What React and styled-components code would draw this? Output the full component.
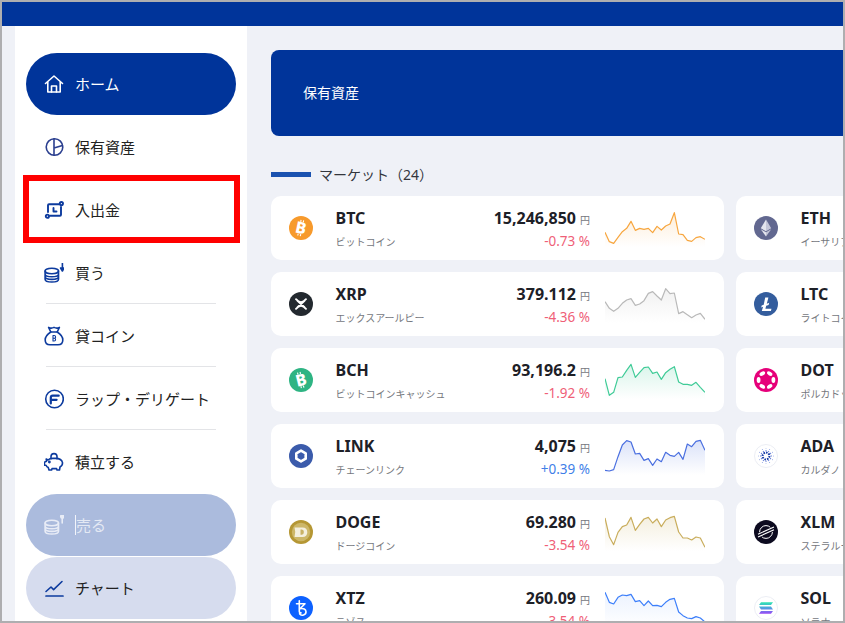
import React from "react";
import styled, { createGlobalStyle } from "styled-components";

const Global = createGlobalStyle`
  html, body { margin: 0; padding: 0; background: #fff; }
  body { font-family: "Noto Sans", "Noto Sans CJK JP", sans-serif; }
  * { box-sizing: border-box; }
`;

const Frame = styled.div`
  position: relative;
  width: 845px;
  height: 623px;
  border: 2px solid #aeaeb0;
  background: #eff1f7;
  overflow: hidden;
  display: flex;
  flex-direction: column;
`;
const TopBar = styled.header`
  flex: 0 0 24px;
  background: #00349a;
`;
const Body = styled.div`
  flex: 1;
  min-height: 0;
  display: flex;
  padding-left: 13px;
`;
const Sidebar = styled.nav`
  flex: 0 0 232px;
  background: #fff;
  padding: 27px 11px 0;
  display: flex;
  flex-direction: column;
  gap: 1px;
`;
const itemBg = { home: "#00349a", sell: "#abbbdd", chart: "#d6dcee", plain: "transparent" };
const itemFg = { home: "#fff", sell: "#e4e9f4", chart: "#222", plain: "#222" };
const NavItem = styled.a`
  flex: 0 0 62px;
  padding: 0 20px;
  border-radius: 31px;
  background: ${(p) => itemBg[p.$kind]};
  color: ${(p) => itemFg[p.$kind]};
`;
const NavInner = styled.div`
  height: 100%;
  display: flex;
  align-items: center;
  gap: 11px;
  font-size: 15px;
  border-bottom: 1px solid ${(p) => (p.$divided ? "#e3e4e7" : "transparent")};
`;
const NavIcon = styled.svg`
  flex: 0 0 20px;
  width: 20px;
  height: 20px;
  margin-left: -2px;
  fill: none;
  stroke: ${(p) => p.$color || "#0d3b9e"};
  stroke-width: ${(p) => p.$weight || 1.6};
  stroke-linecap: round;
  stroke-linejoin: round;
`;
const CaretLabel = styled.span`
  border-left: 1px solid #f2f4fa;
  line-height: 20px;
`;
const RedBox = styled.div`
  position: absolute;
  left: 21px;
  top: 173px;
  width: 217px;
  height: 68px;
  border: 6px solid #ff0000;
`;
const Main = styled.main`
  flex: 1;
  min-width: 0;
  padding: 24px 0 0 24px;
  overflow: hidden;
`;
const Hero = styled.section`
  width: 640px;
  height: 86px;
  border-radius: 8px;
  background: #00349a;
  color: #fff;
  font-size: 14px;
  padding: 0 0 2px 32px;
  display: flex;
  align-items: center;
`;
const SectionHead = styled.h2`
  margin: 26px 0 10px;
  height: 24px;
  display: flex;
  align-items: center;
  gap: 8px;
  font-size: 14px;
  font-weight: 400;
  color: #33363d;
  &::before {
    content: "";
    width: 40px;
    height: 5px;
    background: #1a52b0;
  }
`;
const Grid = styled.div`
  display: grid;
  grid-template-columns: 453px 453px;
  grid-auto-rows: 64px;
  gap: 12px;
`;
const Card = styled.article`
  background: #fff;
  border-radius: 10px;
  padding: 0 19px 0 18px;
  display: flex;
  align-items: flex-start;
`;
const CoinLogo = styled.svg`
  flex: 0 0 24px;
  width: 24px;
  height: 24px;
  margin: 20px 23px 0 0;
`;
const Names = styled.div`
  flex: 1;
  min-width: 0;
  padding-top: 10px;
  margin-left: -0.5px;
  white-space: nowrap;
`;
const Symbol = styled.div`
  font-size: 16px;
  line-height: 24px;
  font-weight: 700;
  color: #1d2027;
`;
const CoinName = styled.div`
  font-size: 10px;
  line-height: 14px;
  margin-top: 5px;
  color: #75777d;
`;
const Quote = styled.div`
  padding-top: 10px;
  text-align: right;
  white-space: nowrap;
`;
const Price = styled.div`
  font-size: 16px;
  line-height: 24px;
  font-weight: 700;
  color: #1d2027;
`;
const Yen = styled.span`
  font-size: 10px;
  font-weight: 400;
  color: #75777d;
  margin-left: 4px;
`;
const Change = styled.div`
  font-size: 13.5px;
  line-height: 18px;
  color: ${(p) => (p.$up ? "#3f7fe8" : "#ef5f78")};
`;
const Spark = styled.svg`
  flex: 0 0 100px;
  width: 100px;
  height: 64px;
  margin-left: 15px;
`;

function Sparkline({ id, color, ys, tint = 0.2 }) {
  const pts = ys.map((y, i) => [(i * 13) / 3, y / 3]);
  pts[pts.length - 1][0] = 100;
  const line = pts.map((p) => p.join(",")).join(" ");
  const area = `0,51 ${line} 100,51`;
  return (
    <Spark viewBox="0 0 100 64">
      <defs>
        <linearGradient id={id} x1="0" y1="0" x2="0" y2="1">
          <stop offset="0" stopColor={color} stopOpacity={tint} />
          <stop offset="1" stopColor={color} stopOpacity="0" />
        </linearGradient>
      </defs>
      <polygon points={area} fill={`url(#${id})`} />
      <polyline points={line} fill="none" stroke={color} strokeWidth="1.2" strokeLinejoin="round" />
    </Spark>
  );
}

const Letter = ({ children, rotate = 12, size = 16 }) => (
  <text
    x="12"
    y="17.6"
    textAnchor="middle"
    fill="#fff"
    fontFamily="Noto Sans, sans-serif"
    fontWeight="800"
    fontSize={size}
    transform={`rotate(${rotate} 12 12)`}
  >
    {children}
  </text>
);

const BitcoinMark = ({ rotate }) => (
  <g transform={`rotate(${rotate} 12 12)`} stroke="#fff" strokeWidth="1.1">
    <path d="M10.4 4v2M13 4v2M10.4 18v2M13 18v2" />
  </g>
);

const logos = {
  BTC: (
    <>
      <circle cx="12" cy="12" r="12" fill="#f79a2c" />
      <BitcoinMark rotate={12} />
      <Letter>B</Letter>
    </>
  ),
  XRP: (
    <>
      <circle cx="12" cy="12" r="12" fill="#23292f" />
      <path d="M7 7.2 Q12 13 17 7.2 M7 16.8 Q12 11 17 16.8 M8.5 8.8 15.5 15.2 M15.5 8.8 8.5 15.2" fill="none" stroke="#fff" strokeWidth="1.9" strokeLinecap="round" />
    </>
  ),
  BCH: (
    <>
      <circle cx="12" cy="12" r="12" fill="#2eb483" />
      <BitcoinMark rotate={-14} />
      <Letter rotate={-14}>B</Letter>
    </>
  ),
  LINK: (
    <>
      <circle cx="12" cy="12" r="12" fill="#3b5bab" />
      <path d="M12 6.6 16.7 9.3v5.4L12 17.4l-4.7-2.7V9.3z" fill="none" stroke="#fff" strokeWidth="2.6" strokeLinejoin="round" />
    </>
  ),
  DOGE: (
    <>
      <circle cx="12" cy="12" r="12" fill="#b59734" />
      <circle cx="12" cy="12" r="9.2" fill="#cdb768" />
      <path d="M5.5 7.5h8q4.8 0 4.8 4.7t-4.8 4.8h-8q1.5-5 0-9.5z" fill="#f4efdd" />
      <path d="M11.5 9.5h1.4q2 0 2 2.6t-2 2.6h-1.4z" fill="#c9b266" />
    </>
  ),
  XTZ: (
    <>
      <circle cx="12" cy="12" r="12" fill="#0d61ff" />
      <path d="M7.5 7.7h8.5l-5 5q5.6-.9 6 2.9c.3 3.4-4.8 4.8-6.4 2.2M10.3 4.8v10.4c0 1 .6 1.7 1.7 1.7" fill="none" stroke="#fff" strokeWidth="1.6" strokeLinecap="round" strokeLinejoin="round" />
    </>
  ),
  ETH: (
    <>
      <circle cx="12" cy="12" r="12" fill="#626890" />
      <path d="M12 3.5 6.8 12.2 12 15.2z" fill="#e4e5ee" />
      <path d="M12 3.5 17.2 12.2 12 15.2z" fill="#c4c6d8" />
      <path d="M6.8 13.3 12 20.5v-4.2z" fill="#e4e5ee" />
      <path d="M17.2 13.3 12 20.5v-4.2z" fill="#c4c6d8" />
    </>
  ),
  LTC: (
    <>
      <circle cx="12" cy="12" r="12" fill="#345d9d" />
      <path d="M11.2 5.5h3.2l-1.6 6.2 2.4-.9-.6 2.1-2.4.9-.8 2.9h6.1l-.6 2.3H7.8l1.3-4.3-1.9.7.5-1.9 2-.8z" fill="#fff" />
    </>
  ),
  DOT: (
    <>
      <circle cx="12" cy="12" r="12" fill="#e6007a" />
      {[0, 60, 120, 180, 240, 300].map((a) => (
        <ellipse key={a} cx="12" cy="4.6" rx="3" ry="1.9" fill="#fff" transform={`rotate(${a + 30} 12 12)`} />
      ))}
    </>
  ),
  ADA: (
    <>
      <circle cx="12" cy="12" r="11.5" fill="#fff" stroke="#eceef4" />
      <circle cx="12" cy="12" r="3.4" fill="none" stroke="#1c3fa8" strokeWidth="2" strokeDasharray="1.6 1" />
      {[0, 30, 60, 90, 120, 150, 180, 210, 240, 270, 300, 330].map((a) => (
        <g key={a} transform={`rotate(${a} 12 12)`} fill="#6f88dc">
          <circle cx="12" cy="6.8" r="0.7" />
          <circle cx="12" cy="4.6" r="0.45" />
        </g>
      ))}
    </>
  ),
  XLM: (
    <>
      <circle cx="12" cy="12" r="12" fill="#0c0a1f" />
      <circle cx="12" cy="12" r="6.4" fill="none" stroke="#fff" strokeWidth="1" />
      <path d="M4 14.6 20 7.4M4 16.9 20 9.7" stroke="#0c0a1f" strokeWidth="2.8" />
      <path d="M4 14.2 20 7M4 17 20 9.8" stroke="#fff" strokeWidth="1.1" />
    </>
  ),
  SOL: (
    <>
      <defs>
        <linearGradient id="solGrad" x1="0" y1="0" x2="0" y2="1">
          <stop offset="0" stopColor="#2fe6b0" />
          <stop offset="0.5" stopColor="#4f9fe0" />
          <stop offset="1" stopColor="#9a45f5" />
        </linearGradient>
      </defs>
      <circle cx="12" cy="12" r="11.5" fill="#fff" stroke="#eceef4" />
      <path d="M7 6.2h12l-2 2.8H5zM5 10.6h12l2 2.8H7zM7 15h12l-2 2.8H5z" fill="url(#solGrad)" />
    </>
  ),
};

const coinsLeft = [
  { s: "BTC", n: "ビットコイン", p: "15,246,850", c: "-0.73", color: "#f7a63f", ys: [109,137,142,124,107,97,76,103,97,100,97,110,91,102,90,84,50,114,116,133,136,125,122,130] },
  { s: "XRP", n: "エックスアールピー", p: "379.112", c: "-4.36", color: "#b9b9b9", ys: [89,109,118,109,94,84,80,100,96,86,64,59,72,84,50,65,63,125,119,128,137,129,124,142] },
  { s: "BCH", n: "ビットコインキャッシュ", p: "93,196.2", c: "-1.92", color: "#3fcb97", ys: [92,142,133,89,87,67,49,88,73,59,57,76,72,94,74,64,56,102,109,109,112,103,118,133] },
  { s: "LINK", n: "チェーンリンク", p: "4,075", c: "+0.39", up: true, color: "#4a6fe0", ys: [139,141,137,98,63,50,54,90,88,109,104,124,105,113,85,94,97,85,106,60,68,52,49,79] },
  { s: "DOGE", n: "ドージコイン", p: "69.280", c: "-3.54", color: "#c9ad5c", ys: [54,110,134,97,80,75,52,91,73,57,52,69,57,80,60,53,49,96,114,114,120,111,114,142] },
  { s: "XTZ", n: "テゾス", p: "260.09", c: "-3.54", color: "#3d7ffa", tint: 0.1, ys: [49,79,84,64,57,59,55,77,74,89,75,89,88,92,79,70,67,108,119,126,128,122,126,138] },
];
const coinsRight = [
  { s: "ETH", n: "イーサリアム" },
  { s: "LTC", n: "ライトコイン" },
  { s: "DOT", n: "ポルカドット" },
  { s: "ADA", n: "カルダノ" },
  { s: "XLM", n: "ステラルーメン" },
  { s: "SOL", n: "ソラナ" },
];

function CoinCard({ coin }) {
  return (
    <Card>
      <CoinLogo viewBox="0 0 24 24">{logos[coin.s]}</CoinLogo>
      <Names>
        <Symbol>{coin.s}</Symbol>
        <CoinName>{coin.n}</CoinName>
      </Names>
      {coin.p && (
        <>
          <Quote>
            <Price>
              {coin.p}
              <Yen>円</Yen>
            </Price>
            <Change $up={coin.up}>{coin.c} %</Change>
          </Quote>
          <Sparkline id={`spark${coin.s}`} color={coin.color} ys={coin.ys} tint={coin.tint} />
        </>
      )}
    </Card>
  );
}

const HomeIcon = () => (
  <NavIcon viewBox="0 0 20 20" $color="#fff">
    <path d="M1.5 9.5 10 2l8.5 7.5M3.8 7.8V18h12.4V7.8" />
    <path d="M7.5 18v-6h5v6" />
  </NavIcon>
);
const PieIcon = () => (
  <NavIcon viewBox="0 0 20 20" $color="#2b3f8f">
    <circle cx="10.5" cy="10" r="8.3" />
    <path d="M10 1.8v16.4M10 11 18.4 8.4" />
  </NavIcon>
);
const TransferIcon = () => (
  <NavIcon viewBox="0 0 20 20" $weight={1.9}>
    <path d="M4 12V5.2q0-1 1-1h10M17 7v7.8q0 1-1 1H6" />
    <circle cx="17.4" cy="3.6" r="1.6" />
    <circle cx="3.4" cy="16.2" r="1.6" />
    <path d="M9.5 8v3.5H12.5" />
  </NavIcon>
);
const Coins = ({ color }) => (
  <g fill="none" stroke={color}>
    <ellipse cx="7.8" cy="8" rx="6.7" ry="2.8" />
    <path d="M1.1 8v8.2c0 1.6 3 2.8 6.7 2.8s6.7-1.2 6.7-2.8V8M1.1 11c0 1.6 3 2.8 6.7 2.8s6.7-1.2 6.7-2.8M1.1 13.6c0 1.6 3 2.8 6.7 2.8s6.7-1.2 6.7-2.8" />
  </g>
);
const BuyIcon = () => (
  <NavIcon viewBox="0 0 20 20">
    <Coins color="#0d3b9e" />
    <path d="M18.4 -0.5v5" />
    <path d="M16.6 5h3.4L18.4 8z" fill="#0d3b9e" />
  </NavIcon>
);
const SellIcon = () => (
  <NavIcon viewBox="0 0 20 20" $color="#e8ecf6">
    <Coins color="#e8ecf6" />
    <circle cx="18.2" cy="1.6" r="1.5" fill="#e8ecf6" />
    <path d="M18.2 3v5" />
  </NavIcon>
);
const BagIcon = () => (
  <NavIcon viewBox="0 0 20 20">
    <path d="M6.8 6 4.6 1.4q2.6 1.4 5.4 0 2.8 1.4 5.4 0L13.2 6z" />
    <path d="M6.8 6Q1.2 9.5 1.2 14q0 4.8 4.8 4.8h8q4.8 0 4.8-4.8 0-4.5-5.6-8" />
    <path d="M9 9.5v5.5M9 9.5h1.2q1.4 0 1.4 1.4t-1.4 1.3H9M9 15h1.2q1.4 0 1.4-1.4t-1.4-1.4" strokeWidth="1.1" />
  </NavIcon>
);
const FlareIcon = () => (
  <NavIcon viewBox="0 0 20 20">
    <circle cx="10.5" cy="10" r="8.8" />
    <path d="M6.8 14.5V8.6q0-1.9 1.9-1.9h6M7 10.8h5.6" strokeWidth="2.2" />
  </NavIcon>
);
const PigIcon = () => (
  <NavIcon viewBox="0 0 20 20">
    <path d="M7 6.8V4.6a3 3 0 0 1 6 0v2.2" />
    <path d="M4 8q2-2 6-1.6 7.5-.6 8.5 4.2.2 3-2.5 4.4L15.5 18H13l-.4-1.4H8L7.6 18H5l-.7-2.4Q2.8 15 2 13.2H.4v-3L2.5 9.3 2.2 7z" />
    <circle cx="5.4" cy="10" r="0.6" fill="#0d3b9e" />
  </NavIcon>
);
const ChartIcon = () => (
  <NavIcon viewBox="0 0 20 20">
    <path d="M2 13.5 7 9l2.6 2.6L18 3.5" />
    <path d="M2 18h17" strokeWidth="1.7" />
  </NavIcon>
);

const nav = [
  { label: "ホーム", kind: "home", Icon: HomeIcon },
  { label: "保有資産", kind: "plain", Icon: PieIcon },
  { label: "入出金", kind: "plain", Icon: TransferIcon },
  { label: "買う", kind: "plain", Icon: BuyIcon, divided: true },
  { label: "貸コイン", kind: "plain", Icon: BagIcon, divided: true },
  { label: "ラップ・デリゲート", kind: "plain", Icon: FlareIcon, divided: true },
  { label: "積立する", kind: "plain", Icon: PigIcon },
  { label: "売る", kind: "sell", Icon: SellIcon, caret: true },
  { label: "チャート", kind: "chart", Icon: ChartIcon },
];

export default function App() {
  return (
    <Frame>
      <Global />
      <TopBar />
      <Body>
        <Sidebar>
          {nav.map(({ label, kind, Icon, divided, caret }) => (
            <NavItem key={label} $kind={kind}>
              <NavInner $divided={divided}>
                <Icon />
                {caret ? <CaretLabel>{label}</CaretLabel> : <span>{label}</span>}
              </NavInner>
            </NavItem>
          ))}
        </Sidebar>
        <Main>
          <Hero>保有資産</Hero>
          <SectionHead>マーケット（24）</SectionHead>
          <Grid>
            {coinsLeft.map((c, i) => (
              <React.Fragment key={c.s}>
                <CoinCard coin={c} />
                <CoinCard coin={coinsRight[i]} />
              </React.Fragment>
            ))}
          </Grid>
        </Main>
      </Body>
      <RedBox />
    </Frame>
  );
}
